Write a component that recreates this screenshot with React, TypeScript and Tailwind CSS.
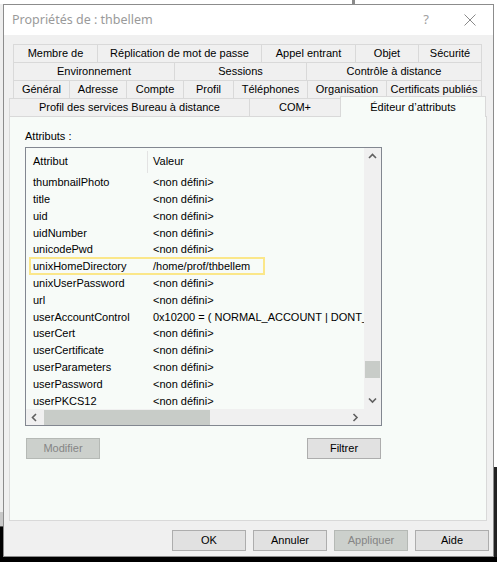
import React from "react";

const tabRows: { label: string; w: number }[][] = [
  [
    { label: "Membre de", w: 84 },
    { label: "Réplication de mot de passe", w: 164 },
    { label: "Appel entrant", w: 94 },
    { label: "Objet", w: 63 },
    { label: "Sécurité", w: 64 },
  ],
  [
    { label: "Environnement", w: 161 },
    { label: "Sessions", w: 132 },
    { label: "Contrôle à distance", w: 176 },
  ],
  [
    { label: "Général", w: 56 },
    { label: "Adresse", w: 57 },
    { label: "Compte", w: 57 },
    { label: "Profil", w: 50 },
    { label: "Téléphones", w: 74 },
    { label: "Organisation", w: 79 },
    { label: "Certificats publiés", w: 96 },
  ],
];

const attributes: [string, string][] = [
  ["thumbnailPhoto", "<non défini>"],
  ["title", "<non défini>"],
  ["uid", "<non défini>"],
  ["uidNumber", "<non défini>"],
  ["unicodePwd", "<non défini>"],
  ["unixHomeDirectory", "/home/prof/thbellem"],
  ["unixUserPassword", "<non défini>"],
  ["url", "<non défini>"],
  ["userAccountControl", "0x10200 = ( NORMAL_ACCOUNT | DONT_EXPIRE_PASSWD )"],
  ["userCert", "<non défini>"],
  ["userCertificate", "<non défini>"],
  ["userParameters", "<non défini>"],
  ["userPassword", "<non défini>"],
  ["userPKCS12", "<non défini>"],
];

function Chevron({ dir }: { dir: "up" | "down" | "left" | "right" }) {
  const pts = {
    up: "1,5 4.5,1.5 8,5",
    down: "1,1.5 4.5,5 8,1.5",
    left: "5,1 1.5,4.5 5,8",
    right: "1.5,1 5,4.5 1.5,8",
  }[dir];
  const vertical = dir === "up" || dir === "down";
  return (
    <svg width={vertical ? 9 : 7} height={vertical ? 7 : 9} viewBox={vertical ? "0 0 9 7" : "0 0 7 9"}>
      <polyline points={pts} fill="none" stroke="#606060" strokeWidth="1.6" />
    </svg>
  );
}

function Button({ label, disabled }: { label: string; disabled?: boolean }) {
  return (
    <div
      className={`w-[74px] h-[21px] flex items-center justify-center border text-[11px] ${
        disabled
          ? "bg-[#ccd0cc] border-[#b5b9b5] text-[#858585]"
          : "bg-[#e1e1e1] border-[#adadad] text-black"
      }`}
    >
      {label}
    </div>
  );
}

export default function App() {
  return (
    <div
      className="w-[497px] h-[562px] bg-white flex flex-col overflow-hidden"
      style={{ fontFamily: '"Liberation Sans", Arial, sans-serif' }}
    >
      {/* background strip behind the dialog */}
      <div className="h-[4px] shrink-0 flex pl-[352px]">
        <div className="w-[3px] h-full bg-[#8a8a8a]" />
      </div>

      <div className="flex flex-1 min-h-0">
        <div className="w-[3px] flex flex-col bg-[#eeeeee]">
          <div className="flex-1" />
          <div className="h-[14px] bg-[#c8c8c8]" />
          <div className="h-px bg-[#555]" />
          <div className="h-[30px] bg-black" />
        </div>

        {/* dialog window */}
        <div className="w-[491px] border border-[#8c8c8c] bg-[#f0f0f0] flex flex-col">
          {/* title bar */}
          <div className="h-[30px] bg-white flex items-center shrink-0">
            <span
              className="ml-[8px] text-[12.5px] text-[#9a9a9a]"
              style={{ fontFamily: '"Noto Sans", "Open Sans", sans-serif' }}
            >
              Propriétés de : thbellem
            </span>
            <div className="flex-1" />
            <span
              className="text-[13px] text-[#a0a0a0] mr-[35px]"
              style={{ fontFamily: '"Noto Sans", sans-serif' }}
            >
              ?
            </span>
            <svg width="12" height="12" viewBox="0 0 12 12" className="mr-[17px]">
              <line x1="0.5" y1="0.5" x2="11.5" y2="11.5" stroke="#8a8a8a" strokeWidth="1" />
              <line x1="11.5" y1="0.5" x2="0.5" y2="11.5" stroke="#8a8a8a" strokeWidth="1" />
            </svg>
          </div>

          {/* body */}
          <div className="flex-1 pt-[9px] pl-[5px] flex flex-col text-[11px] text-black">
            {/* tabs */}
            {tabRows.map((row, i) => (
              <div key={i} className="h-[18px] ml-[4px] flex">
                {row.map((t, j) => (
                  <div
                    key={t.label}
                    className={`h-full flex items-center justify-center border-t border-l border-[#d9d9d9] bg-[#f0f0f0] ${
                      j === row.length - 1 ? "border-r" : ""
                    }`}
                    style={{ width: t.w }}
                  >
                    {t.label}
                  </div>
                ))}
              </div>
            ))}
            <div className="h-[18px] flex items-start">
              <div className="w-[240px] h-full flex items-center justify-center border-t border-l border-[#d9d9d9]">
                Profil des services Bureau à distance
              </div>
              <div className="w-[91px] h-full flex items-center justify-center border-t border-l border-[#d9d9d9]">
                COM+
              </div>
              <div className="w-[146px] h-[21px] -mt-[2px] relative z-10 flex justify-center pt-[2px] border-t border-l border-r border-[#d9d9d9] bg-[#f7fbf8]">
                Éditeur d’attributs
              </div>
            </div>

            {/* tab panel */}
            <div className="w-[478px] h-[405px] border border-[#d9d9d9] bg-[#f7fbf8] pl-[15px] pt-[13px] flex flex-col shrink-0">
              <div className="h-[13px] leading-[13px]">Attributs :</div>

              <div className="mt-[4px] w-[357px] h-[279px] border border-[#828790] flex flex-col">
                <div className="flex-1 flex min-h-0">
                  {/* list content */}
                  <div className="flex-1 min-w-0 overflow-hidden flex flex-col pt-px">
                    <div className="h-[25px] flex items-center shrink-0">
                      <div className="w-[121px] pl-[7px]">Attribut</div>
                      <div className="w-px h-[22px] bg-[#e3e3e3]" />
                      <div className="pl-[5px]">Valeur</div>
                    </div>
                    {attributes.map(([name, value]) => (
                      <div key={name} className="h-[16.8px] flex items-center relative shrink-0">
                        {name === "unixHomeDirectory" && (
                          <span className="absolute left-[3px] -top-px bottom-0 w-[236px] border-2 border-[#fbe78a]" />
                        )}
                        <div className="w-[121px] pl-[7px] shrink-0">{name}</div>
                        <div className="pl-[6px] whitespace-nowrap">{value}</div>
                      </div>
                    ))}
                  </div>

                  {/* vertical scrollbar */}
                  <div className="w-[17px] bg-[#f0f0f0] flex flex-col">
                    <div className="h-[17px] flex items-center justify-center">
                      <Chevron dir="up" />
                    </div>
                    <div className="flex-1 flex flex-col items-center">
                      <div className="mt-[196px] w-[15px] h-[17px] bg-[#c8ccc8]" />
                    </div>
                    <div className="h-[17px] flex items-center justify-center">
                      <Chevron dir="down" />
                    </div>
                  </div>
                </div>

                {/* horizontal scrollbar */}
                <div className="h-[16px] flex bg-[#f0f0f0] shrink-0">
                  <div className="w-[17px] flex items-center justify-center">
                    <Chevron dir="left" />
                  </div>
                  <div className="flex-1 flex items-center">
                    <div className="ml-px w-[166px] h-[15px] bg-[#c8ccc8]" />
                  </div>
                  <div className="w-[17px] flex items-center justify-center">
                    <Chevron dir="right" />
                  </div>
                  <div className="w-[17px]" />
                </div>
              </div>

              <div className="mt-[12px] w-[357px] flex justify-between px-px">
                <Button label="Modifier" disabled />
                <Button label="Filtrer" />
              </div>
            </div>

            {/* dialog buttons */}
            <div className="mt-[9px] flex justify-end gap-[7px] pr-[4px]">
              <Button label="OK" />
              <Button label="Annuler" />
              <Button label="Appliquer" disabled />
              <Button label="Aide" />
            </div>
          </div>
        </div>

        <div className="w-[3px] flex flex-col bg-white">
          <div className="flex-1" />
          <div className="h-[90px] bg-[#222]" />
        </div>
      </div>

      <div className="h-[5px] shrink-0 bg-black" />
    </div>
  );
}
